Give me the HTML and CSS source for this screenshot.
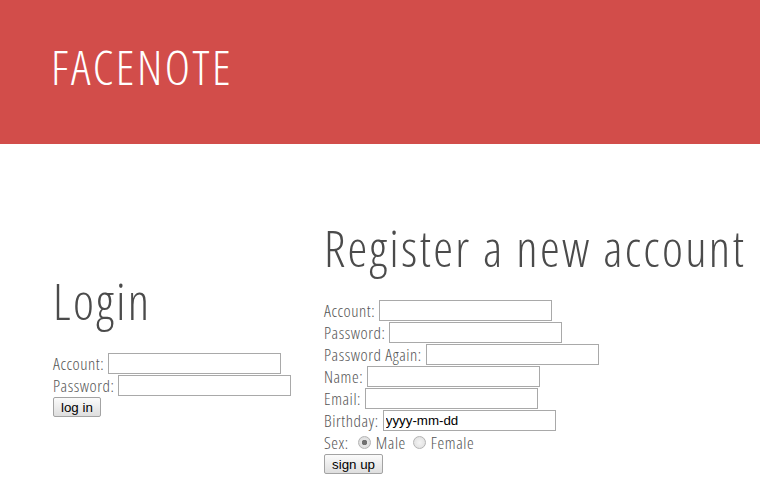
FILE: index.html
```html
<!DOCTYPE html>
<html lang="en">
<head>
<meta charset="utf-8">
<title>Facenote</title>
<link rel="stylesheet" href="styles.css">
</head>
<body>
<header class="topbar">
  <h1 class="brand">FACENOTE</h1>
</header>
<main class="main">
  <section class="col col-login">
    <h2 class="title">Login</h2>
    <form class="form">
      <div class="row"><label>Account:</label><input class="field" type="text"></div>
      <div class="row"><label>Password:</label><input class="field" type="password"></div>
      <div class="row"><button class="btn" type="button">log in</button></div>
    </form>
  </section>
  <section class="col col-register">
    <h2 class="title">Register a new account</h2>
    <form class="form">
      <div class="row"><label>Account:</label><input class="field" type="text"></div>
      <div class="row"><label>Password:</label><input class="field" type="password"></div>
      <div class="row"><label>Password Again:</label><input class="field" type="password"></div>
      <div class="row"><label>Name:</label><input class="field" type="text"></div>
      <div class="row"><label>Email:</label><input class="field" type="text"></div>
      <div class="row"><label>Birthday:</label><input class="field" type="text" value="yyyy-mm-dd"></div>
      <div class="row"><label>Sex:</label><input class="radio" type="radio" name="sex" checked><span class="opt">Male</span><input class="radio" type="radio" name="sex"><span class="opt">Female</span></div>
      <div class="row"><button class="btn" type="button">sign up</button></div>
    </form>
  </section>
</main>
</body>
</html>
```
FILE: styles.css
```css
html, body {
  margin: 0;
  padding: 0;
  background: #ffffff;
}
body {
  font-family: "Open Sans", "DejaVu Sans", sans-serif;
  font-stretch: 75%;
  font-weight: 300;
  color: #555555;
}
.topbar {
  background: #d24d4a;
  height: 144px;
  box-sizing: border-box;
  padding: 43px 0 0 51px;
}
.brand {
  margin: 0;
  font-size: 48px;
  line-height: 48px;
  font-weight: 300;
  letter-spacing: 2.5px;
  color: #ffffff;
}
.main {
  display: flex;
  align-items: center;
  padding: 79px 0 0 53px;
}
.col-login {
  flex: none;
  width: 271px;
  margin-bottom: 4px;
}
.col-register {
  flex: none;
}
.title {
  margin: 0 0 26px 0;
  font-size: 50px;
  line-height: 50px;
  font-weight: 300;
  letter-spacing: 2.3px;
  color: #4b4b4b;
  white-space: nowrap;
}
.form {
  margin: 0;
}
.row {
  display: flex;
  align-items: center;
  height: 22px;
  font-size: 17px;
  letter-spacing: 0.55px;
  white-space: nowrap;
}
.row label {
  margin-right: 4px;
}
.field {
  box-sizing: border-box;
  width: 173px;
  height: 21px;
  margin: 0;
  padding: 1px 2px;
  border: 1px solid #a9a9a9;
  font-family: "Liberation Sans", Arial, sans-serif;
  font-stretch: normal;
  font-size: 13.33px;
  font-weight: 400;
  letter-spacing: 0;
  color: #000000;
  background: #ffffff;
}
.radio {
  appearance: none;
  -webkit-appearance: none;
  box-sizing: border-box;
  width: 13px;
  height: 13px;
  margin: 0 5px 0 5px;
  border-radius: 50%;
  border: 1px solid #b4b4b4;
  background: radial-gradient(circle, #f4f4f4 0%, #dcdcdc 100%);
}
.radio:checked {
  background: radial-gradient(circle, #707070 0 2.5px, #e6e6e6 3px, #d6d6d6 100%);
}
.opt {
  margin-right: 2px;
}
.btn {
  box-sizing: border-box;
  height: 20px;
  margin: 0;
  padding: 0 7px;
  border: 1px solid #a3a3a3;
  border-radius: 2px;
  background: linear-gradient(#fbfbfb, #dedede);
  font-family: "Liberation Sans", Arial, sans-serif;
  font-stretch: normal;
  font-size: 13.33px;
  font-weight: 400;
  letter-spacing: 0;
  color: #000000;
}
```
